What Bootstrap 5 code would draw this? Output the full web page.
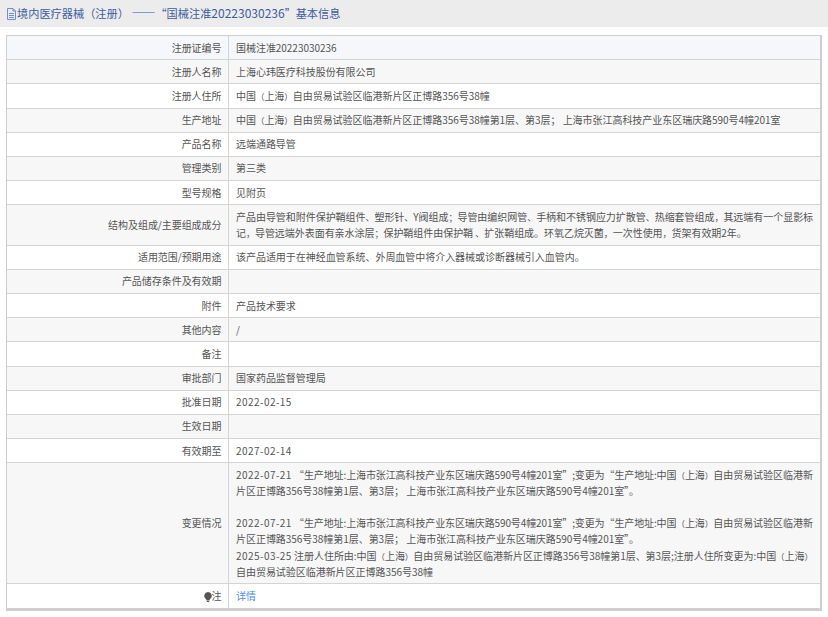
<!DOCTYPE html>
<html lang="zh"><head><meta charset="utf-8">
<link href="https://cdn.jsdelivr.net/npm/bootstrap@5.3.0/dist/css/bootstrap.min.css" rel="stylesheet">
<style>
body{font-family:"Noto Sans CJK SC","Liberation Sans",sans-serif;background:#fff;color:#555;font-size:10px}
.head-bar{height:27px;background:#ececec;color:#3d5ca3;font-size:11.2px;line-height:26px;padding-left:6px;margin-bottom:8px;white-space:nowrap}
.head-bar svg{vertical-align:-2px;margin-right:0}
.head-num{font-size:12px}
.head-end{font-size:11px}
.info-wrap{margin:0 6px;border:solid #cfcfcf;border-width:1px 2px 3px 1px}
.info-table{margin:0;font-size:10px;letter-spacing:-.04px;line-height:16.15px;--bs-table-border-color:#d4d4d4;--bs-table-color:#555;color:#555}
.info-table td{padding:3.52px 3px 3.52px 7.5px;border-color:#d4d4d4;vertical-align:middle}
.info-table td:first-child{width:221px;text-align:right;padding-right:6px;padding-left:4px;border-right:1px solid #d4d4d4}
.info-table tr:last-child td{border-bottom:0}
.info-table tr.tint td{background:#f7f7f7}
.info-table tr.tint-first td{background:#f5f7fa}
.info-table a{color:#4a8cf0;text-decoration:none}
.narrow-p{font-size:8.5px;line-height:1}
.mid-p{font-family:"Noto Sans CJK TC",sans-serif;line-height:1}
.tight-p{font-size:9px;line-height:1}
.date-t{letter-spacing:.45px}
.squeeze-t{letter-spacing:-.11px}
</style></head><body>
<div class="head-bar"><svg width="11" height="12" viewBox="0 0 11 12"><path d="M1.5.5h5.500l2.500 2.500v8.500h-8zM7 .5v2.500h2.500M3 5.500h5M3 7.500h5M3 9.500h5" fill="none" stroke="#6f8fd0"/></svg>境内医疗器械（注册） <span class="head-num">——</span>“国械注准<span class="head-num">20223030236</span><span class="head-end">”</span>基本信息</div>
<div class="info-wrap"><table class="table info-table">
<tr class="tint-first"><td>注册证编号</td><td>国械注准20223030236</td></tr>
<tr class="tint"><td>注册人名称</td><td>上海心玮医疗科技股份有限公司</td></tr>
<tr><td>注册人住所</td><td>中国<span class="narrow-p">（</span>上海<span class="narrow-p">）</span>自由贸易试验区临港新片区正博路356号38幢</td></tr>
<tr class="tint"><td>生产地址</td><td>中国<span class="narrow-p">（</span>上海<span class="narrow-p">）</span>自由贸易试验区临港新片区正博路356号38幢第1层、第3层<span class="mid-p">；</span> 上海市张江高科技产业东区瑞庆路590号4幢201室</td></tr>
<tr><td>产品名称</td><td>远端通路导管</td></tr>
<tr class="tint"><td>管理类别</td><td>第三类</td></tr>
<tr><td>型号规格</td><td>见附页</td></tr>
<tr class="tint"><td>结构及组成/主要组成成分</td><td>产品由导管和附件保护鞘组件<span class="tight-p">、</span>塑形针<span class="tight-p">、</span>Y阀组成<span class="mid-p tight-p">；</span>导管由编织网管<span class="tight-p">、</span>手柄和不锈钢应力扩散管<span class="tight-p">、</span>热缩套管组成<span class="mid-p tight-p">，</span>其远端有一个显影标<br>记<span class="mid-p tight-p">，</span>导管远端外表面有亲水涂层<span class="mid-p tight-p">；</span>保护鞘组件由保护鞘 <span class="tight-p">、</span>扩张鞘组成。环氧乙烷灭菌<span class="mid-p tight-p">，</span>一次性使用<span class="mid-p tight-p">，</span>货架有效期2年。</td></tr>
<tr><td>适用范围/预期用途</td><td>该产品适用于在神经血管系统、外周血管中将介入器械或诊断器械引入血管内。</td></tr>
<tr class="tint"><td>产品储存条件及有效期</td><td></td></tr>
<tr><td>附件</td><td>产品技术要求</td></tr>
<tr class="tint"><td>其他内容</td><td>/</td></tr>
<tr><td>备注</td><td></td></tr>
<tr class="tint"><td>审批部门</td><td>国家药品监督管理局</td></tr>
<tr><td>批准日期</td><td><span class="date-t">2022-02-15</span></td></tr>
<tr class="tint"><td>生效日期</td><td></td></tr>
<tr><td>有效期至</td><td><span class="date-t">2027-02-14</span></td></tr>
<tr class="tint"><td>变更情况</td><td><span class="date-t">2022-07-21</span> <span class="squeeze-t">“生产地址:上海市张江高科技产业东区瑞庆路590号4幢201室”;变更为“生产地址:中国</span><span class="narrow-p">（</span>上海<span class="narrow-p">）</span>自由贸易试验区临港新<br>片区正博路356号38幢第1层、第3层<span class="mid-p">；</span> 上海市张江高科技产业东区瑞庆路590号4幢201室”<span class="mid-p">。</span><br><br><span class="date-t">2022-07-21</span> <span class="squeeze-t">“生产地址:上海市张江高科技产业东区瑞庆路590号4幢201室”;变更为“生产地址:中国</span><span class="narrow-p">（</span>上海<span class="narrow-p">）</span>自由贸易试验区临港新<br>片区正博路356号38幢第1层、第3层<span class="mid-p">；</span> 上海市张江高科技产业东区瑞庆路590号4幢201室”<span class="mid-p">。</span><br><span class="date-t">2025-03-25</span> 注册人住所由:中国<span class="narrow-p">（</span>上海<span class="narrow-p">）</span>自由贸易试验区临港新片区正博路356号38幢第1层、第3层;注册人住所变更为:中国<span class="narrow-p">（</span>上海<span class="narrow-p">）</span><br>自由贸易试验区临港新片区正博路356号38幢</td></tr>
<tr><td><svg width="8" height="10" viewBox="0 0 8 10"><path d="M4 0a3.800 3.800 0 0 0-2 7l.5 1.500h3L6 7a3.800 3.800 0 0 0-2-7zM2.800 9h2.400v1H2.800z" fill="#555"/></svg>注</td><td><a href="#">详情</a></td></tr>
</table></div>
<script src="https://cdn.jsdelivr.net/npm/bootstrap@5.3.0/dist/js/bootstrap.bundle.min.js"></script>
</body></html>
